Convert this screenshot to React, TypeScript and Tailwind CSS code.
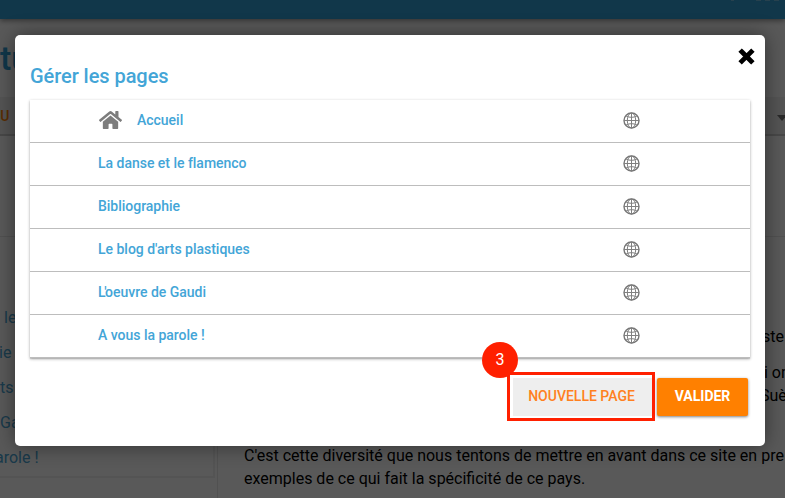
import type { ReactNode } from "react";
import { FaHome } from "react-icons/fa";

const pages = [
  "Accueil",
  "La danse et le flamenco",
  "Bibliographie",
  "Le blog d'arts plastiques",
  "L'oeuvre de Gaudi",
  "A vous la parole !",
];

const navItems = [
  { text: "le", indent: "pl-[4px]" },
  { text: "ie", indent: "-ml-[1px]" },
  { text: "ts", indent: "pl-0" },
  { text: "Ga", indent: "pl-0" },
  { text: "arole !", indent: "-ml-[5px]" },
];

function Globe() {
  return (
    <svg viewBox="0 0 17 17" className="h-[17px] w-[17px]" fill="none" stroke="#808080" strokeWidth="1">
      <circle cx="8.5" cy="8.5" r="7.5" strokeWidth="1.4" stroke="#757575" />
      <ellipse cx="8.5" cy="8.5" rx="4.2" ry="7.5" />
      <path d="M8.5 1v15M1 8.5h15M3.2 4.2c3.2 1.5 7.4 1.5 10.6 0M3.2 12.8c3.2-1.5 7.4-1.5 10.6 0" />
    </svg>
  );
}

function Line({ children }: { children: ReactNode }) {
  return <div className="h-[23px] whitespace-nowrap leading-[23px]">{children}</div>;
}

function Backdrop() {
  return (
    <div className="flex h-full flex-col bg-white">
      <header className="relative z-10 flex h-[19px] shrink-0 justify-end gap-[22px] bg-[#339dd3] pr-[6px] shadow-[0_2px_5px_rgba(0,0,0,0.4)]">
        <span className="h-px w-[3px] bg-white/30" />
        <span className="flex gap-1">
          <span className="h-px w-[5px] bg-white/30" />
          <span className="h-px w-[5px] bg-white/30" />
          <span className="h-px w-[5px] bg-white/30" />
        </span>
      </header>
      <div className="h-[78px] shrink-0 pt-[17px] text-[34px] font-medium leading-[44px] text-[#339dd3]">tu</div>
      <div className="flex h-[39px] shrink-0 items-center justify-between border-b-2 border-[#cfcfcf] bg-[#efefef]">
        <span className="-ml-[9px] text-[14px] font-medium leading-none text-[#ff8000]">CU</span>
        <svg viewBox="0 0 10 6" className="-mr-[2px] mt-[5px] h-[6px] w-[10px]">
          <path d="M0 0h10L5 6z" fill="#757575" />
        </svg>
      </div>
      <div className="h-[101px] shrink-0 border-b border-[#e8e8e8]" />
      <div className="flex h-[261px] text-[16px]">
        <nav className="h-[241px] w-[215px] shrink-0 border-r-2 border-b-2 border-[#f0f0f0] pt-[63px] text-[#4aa5d5]">
          {navItems.map((item) => (
            <div key={item.text} className={`h-[35px] leading-[35px] ${item.indent}`}>
              {item.text}
            </div>
          ))}
        </nav>
        <article className="ml-[2px] flex-1 border-l border-[#e8e8e8] pl-[26px] pt-[88px] text-black">
          <div className="pl-[518px]"><Line>ste</Line></div>
          <div className="mt-[13px] h-[69px]">
            <div className="pl-[520px]"><Line>i on</Line></div>
            <div className="pl-[516px]"><Line>Suè</Line></div>
          </div>
          <div className="mt-[14px]">
            <Line>C'est cette diversité que nous tentons de mettre en avant dans ce site en pre</Line>
            <Line>exemples de ce qui fait la spécificité de ce pays.</Line>
          </div>
        </article>
      </div>
    </div>
  );
}

function ManagePages() {
  return (
    <section className="flex h-[411px] w-[750px] flex-col rounded-[5px] bg-white px-[15px] shadow-[0_0_20px_rgba(0,0,0,0.45)]">
      <div className="flex h-[65px] shrink-0 justify-between">
        <h1 className="mt-[29px] text-[20px] font-medium leading-[24px] tracking-[-0.06px] text-[#43a5d7]">Gérer les pages</h1>
        <svg viewBox="0 0 17 17" className="-mr-[5px] mt-[13px] h-[17px] w-[17px]">
          <path d="M3.8 3.8l9.4 9.4M13.2 3.8l-9.4 9.4" stroke="#000" strokeWidth="4.8" strokeLinecap="square" />
        </svg>
      </div>
      <ul className="h-[258px] shrink-0 shadow-[0_1px_3px_rgba(0,0,0,0.3),0_1px_1px_rgba(0,0,0,0.12)]">
        {pages.map((page, i) => (
          <li key={page} className="flex h-[43px] items-center border-b border-[#bdbdbd] pl-[68px] pr-[110px] text-[14px] font-medium text-[#43a5d7]">
            {i === 0 && <FaHome className="mb-[3px] ml-[0.5px] mr-[15.5px] h-[22px] w-[23px] text-[#7d7d7d]" />}
            <span className="mb-[2px] tracking-[-0.02px]">
              {page.startsWith("L'") ? <><span className="tracking-[-1.4px]">L'</span>{page.slice(2)}</> : page}
            </span>
            <span className="mb-[2px] ml-auto"><Globe /></span>
          </li>
        ))}
      </ul>
      <div className="mt-[14px] flex items-center justify-end gap-[2px] pr-[2px]">
        <div className="relative h-[49px] w-[148px] border-[3px] border-[#ff2000] p-[3px] pr-0">
          <button className="h-[38px] w-full bg-[#eee] pr-[2px] pb-[2px] text-[14px] font-medium text-[#ff8020]">NOUVELLE PAGE</button>
          <span className="absolute -left-[28px] -top-[33px] flex h-[36px] w-[36px] items-center justify-center rounded-full bg-[#ff2000] text-[16px] text-white">3</span>
        </div>
        <button className="h-[38px] w-[91px] rounded-[2px] bg-[#ff8000] text-[14px] font-bold text-white shadow-[0_1px_3px_rgba(0,0,0,0.5)]">VALIDER</button>
      </div>
    </section>
  );
}

export default function App() {
  return (
    <main className="relative h-[498px] w-[785px] overflow-hidden font-[Roboto,sans-serif]">
      <Backdrop />
      <div className="absolute inset-0 z-20 bg-black/65 pl-[15px] pt-[35px]">
        <ManagePages />
      </div>
    </main>
  );
}
